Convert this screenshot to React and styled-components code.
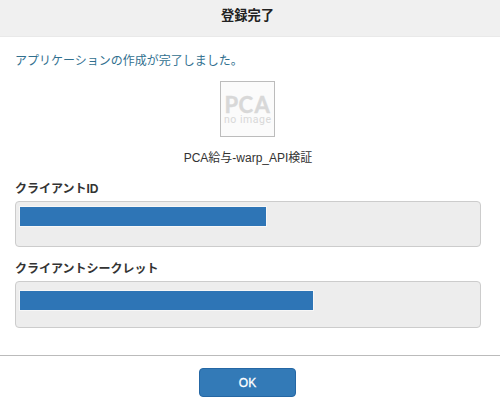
import styled, { createGlobalStyle } from "styled-components";

const GlobalStyle = createGlobalStyle`
  * {
    box-sizing: border-box;
  }

  body {
    margin: 0;
    background: #fff;
    color: #333;
    font-family: "Liberation Sans", "Noto Sans CJK JP", sans-serif;
    font-size: 12px;
  }
`;

const Dialog = styled.div`
  display: flex;
  flex-direction: column;
  width: 500px;
  height: 406px;
  background: #fff;
  overflow: hidden;
`;

const Header = styled.header`
  height: 37px;
  padding: 6px 5px 0 0;
  background: #f0f0f0;
  border-bottom: 1px solid #e9e9e9;
  text-align: center;

  h1 {
    margin: 0;
    font-size: 13.3px;
    font-weight: 700;
    line-height: 20px;
    color: #222;
  }
`;

const Body = styled.main`
  display: flex;
  flex-direction: column;
  height: 318px;
  padding: 14px 19px 0 15px;
`;

const Message = styled.p`
  margin: 0;
  font-size: 12px;
  line-height: 20px;
  color: #31708f;
`;

const AppSummary = styled.div`
  display: flex;
  flex-direction: column;
  align-items: center;
  margin-top: 10px;
`;

const NoImage = styled.svg`
  display: block;
  width: 55px;
  height: 56px;
  margin-right: 1px;
`;

const AppName = styled.div`
  margin-top: 11px;
  font-size: 12px;
  line-height: 20px;
`;

const Field = styled.section`
  margin-top: ${props => props.$gap}px;

  h2 {
    margin: 0 0 2px;
    font-size: 12px;
    font-weight: 700;
    line-height: 20px;
  }
`;

const ValueBox = styled.div`
  height: ${props => props.$height}px;
  padding: ${props => props.$inset}px 4px 0;
  background: #ededed;
  border: 1px solid #ccc;
  border-radius: 4px;
`;

const MaskedValue = styled.div`
  width: ${props => props.$width}px;
  height: 19px;
  background: #2e75b6;
  box-shadow: 0 0 0 1px #f7f7f7;
`;

const Footer = styled.footer`
  display: flex;
  justify-content: center;
  padding: 12px 5px 0 0;
  border-top: 1px solid #bbb;
`;

const OkButton = styled.button`
  width: 97px;
  height: 29px;
  padding: 0;
  border: 1px solid #2567a4;
  border-radius: 4px;
  background: #337ab7;
  color: #fff;
  font-family: inherit;
  font-size: 12px;
  -webkit-text-stroke: 0.3px #fff;
`;

const fields = [
  { label: "クライアントID", gap: 11, height: 46, inset: 5, width: 246 },
  { label: "クライアントシークレット", gap: 12, height: 47, inset: 9, width: 293 },
];

export default function App() {
  return (
    <>
      <GlobalStyle />
      <Dialog>
        <Header>
          <h1>登録完了</h1>
        </Header>
        <Body>
          <Message>アプリケーションの作成が完了しました。</Message>
          <AppSummary>
            <NoImage viewBox="0 0 55 56">
              <rect x="0.5" y="0.5" width="54" height="55" fill="#fbfbfb" stroke="#bcbcbc" />
              <g fill="#d8d8d8">
                <text x="4.5 18.5 34.5" y="31.5" fontSize="22" fontWeight="700" fontFamily="Lato, sans-serif" stroke="#d8d8d8" strokeWidth="0.4">PCA</text>
                <text x="4" y="42" fontSize="10.5" textLength="47" fontFamily="Roboto, sans-serif">no image</text>
              </g>
            </NoImage>
            <AppName>PCA給与-warp_API検証</AppName>
          </AppSummary>
          {fields.map(field => (
            <Field key={field.label} $gap={field.gap}>
              <h2>{field.label}</h2>
              <ValueBox $height={field.height} $inset={field.inset}>
                <MaskedValue $width={field.width} />
              </ValueBox>
            </Field>
          ))}
        </Body>
        <Footer>
          <OkButton type="button">OK</OkButton>
        </Footer>
      </Dialog>
    </>
  );
}
